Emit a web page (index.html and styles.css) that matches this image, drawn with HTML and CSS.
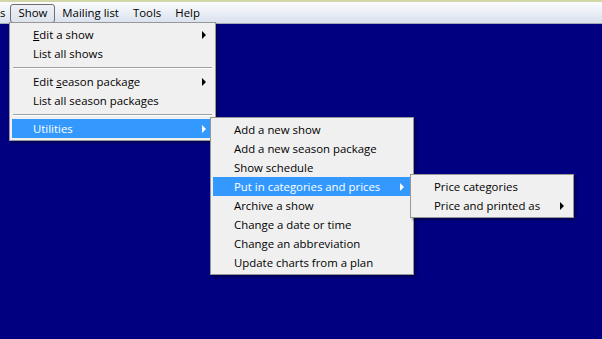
FILE: index.html
```html
<!DOCTYPE html>
<html lang="en">
<head>
  <meta charset="UTF-8">
  <meta name="viewport" content="width=device-width, initial-scale=1.0">
  <title>Show menu</title>
  <link rel="stylesheet" href="styles.css">
</head>
<body>
  <div class="menubar">
    <span class="bar-item clipped">s</span>
    <span class="bar-item open">Show</span>
    <span class="bar-item">Mailing list</span>
    <span class="bar-item">Tools</span>
    <span class="bar-item">Help</span>
  </div>

  <div class="desktop">
    <!-- Show menu -->
    <ul class="menu menu-show">
      <li class="sub"><u>E</u>dit a show</li>
      <li>List all shows</li>
      <li class="sep"></li>
      <li class="sub">Edit <u>s</u>eason package</li>
      <li>List all season packages</li>
      <li class="sep"></li>
      <li class="sub active">Utilities</li>
    </ul>

    <!-- Utilities submenu -->
    <ul class="menu menu-utilities">
      <li>Add a new show</li>
      <li>Add a new season package</li>
      <li>Show schedule</li>
      <li class="sub active">Put in categories and prices</li>
      <li>Archive a show</li>
      <li>Change a date or time</li>
      <li>Change an abbreviation</li>
      <li>Update charts from a plan</li>
    </ul>

    <!-- Categories submenu -->
    <ul class="menu menu-prices">
      <li>Price categories</li>
      <li class="sub">Price and printed as</li>
    </ul>
  </div>
</body>
</html>
```

FILE: styles.css
```css
body {
  margin: 0;
  width: 602px;
  height: 339px;
  overflow: hidden;
  background: #000080;
  font-family: "Open Sans", "Liberation Sans", sans-serif;
  font-size: 11.4px;
  color: #000;
  position: relative;
}
.menubar {
  display: flex;
  align-items: flex-start;
  height: 19px;
  padding-top: 2px;
  border-top: 2px solid #d3d6a6;
  border-bottom: 1px solid #a3aab5;
  background: linear-gradient(#fbfcfd, #d9e1ee);
}
.bar-item {
  height: 16px;
  line-height: 16px;
  padding: 0 6px;
  border: 1px solid transparent;
  border-radius: 3px;
}
.bar-item.clipped {
  margin-left: -1px;
  padding: 0 4px 0 0;
}
.bar-item.open {
  height: 17px;
  padding: 0 7px;
  border-color: #6f6f6f;
  background: linear-gradient(#eef1f6, #dde3ec);
}
.desktop {
  flex: 1;
}
.menu {
  position: absolute;
  margin: 0;
  padding: 2px;
  list-style: none;
  background: #f0f0f0;
  border: 1px solid #979797;
  box-shadow: 2px 2px 2px rgba(0, 0, 0, 0.35);
}
.menu-show {
  left: 9px;
  top: 22px;
  width: 201px;
}
.menu-utilities {
  left: 210px;
  top: 117px;
  width: 198px;
}
.menu-prices {
  left: 410px;
  top: 174px;
  width: 158px;
}
.menu li {
  position: relative;
  height: 19px;
  line-height: 19px;
  padding-left: 21px;
  white-space: nowrap;
}
.menu li.sep {
  height: 0;
  margin: 4px 1px 3px 1px;
  padding: 0;
  border-top: 1px solid #a0a0a0;
  border-bottom: 1px solid #fff;
}
.menu li.active {
  background: #3399ff;
  color: #fff;
}
.menu li.sub::after {
  content: "";
  position: absolute;
  right: 7px;
  top: 6px;
  border-left: 4px solid #000;
  border-top: 4px solid transparent;
  border-bottom: 4px solid transparent;
}
.menu li.active.sub::after {
  border-left-color: #fff;
}
u {
  text-decoration: underline;
  text-underline-offset: 1px;
}
```
